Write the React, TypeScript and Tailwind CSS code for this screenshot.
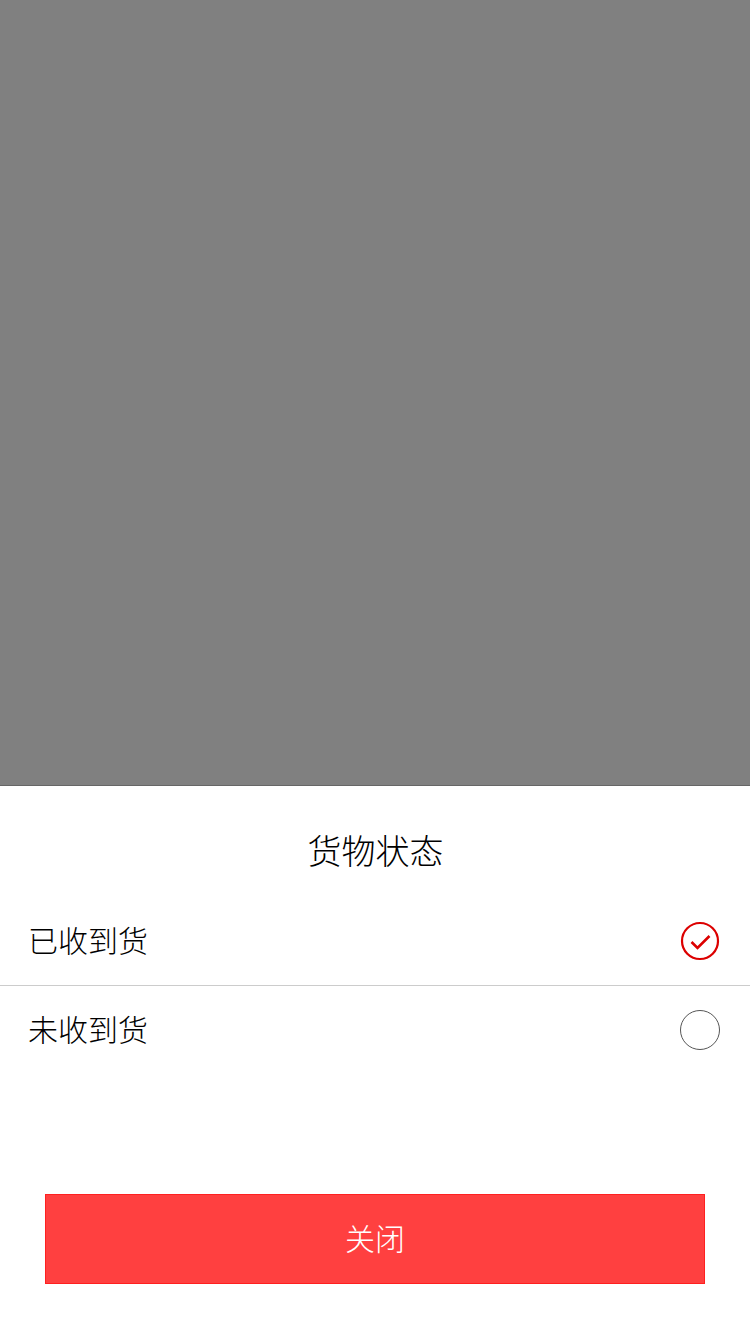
const font = { fontFamily: '"Noto Sans CJK SC", "Noto Sans", sans-serif' };

function Row({ label, checked, border }: { label: string; checked: boolean; border?: boolean }) {
  return (
    <div className={`flex h-[89px] items-center justify-between pl-[28px] pr-[30px] ${border ? "border-b border-[#cccccc]" : ""}`}>
      <span className={`text-[30px] font-light leading-none text-[#000000] ${border ? "mb-[4px]" : "mb-[5px]"}`}>{label}</span>
      {checked ? (
        <svg width="40" height="40" viewBox="0 0 40 40" fill="none">
          <circle cx="20" cy="20" r="18" stroke="#dc0000" strokeWidth="2.2" />
          <path d="M11.5 21 L17.5 27 L29.5 15" stroke="#dc0000" strokeWidth="2.6" />
        </svg>
      ) : (
        <svg className="mb-[2px]" width="40" height="40" viewBox="0 0 40 40" fill="none">
          <circle cx="20" cy="20" r="19.5" stroke="#555555" strokeWidth="1" />
        </svg>
      )}
    </div>
  );
}

export default function App() {
  return (
    <div className="flex h-[1334px] w-[750px] flex-col bg-white" style={font}>
      <div className="h-[786px] border-b border-[#666666] bg-[#808080]" />
      <div className="flex h-[111px] items-center justify-center pl-[1px] pt-[17px]">
        <h1 className="text-[34px] font-light leading-none text-[#000000]">货物状态</h1>
      </div>
      <Row label="已收到货" checked border />
      <Row label="未收到货" checked={false} />
      <div className="flex flex-1 justify-center pt-[119px]">
        <button className="flex h-[90px] w-[660px] items-center justify-center border border-[#ff2020] bg-[#ff4040] pb-[4px] text-[30px] font-light leading-none text-white">
          关闭
        </button>
      </div>
    </div>
  );
}
